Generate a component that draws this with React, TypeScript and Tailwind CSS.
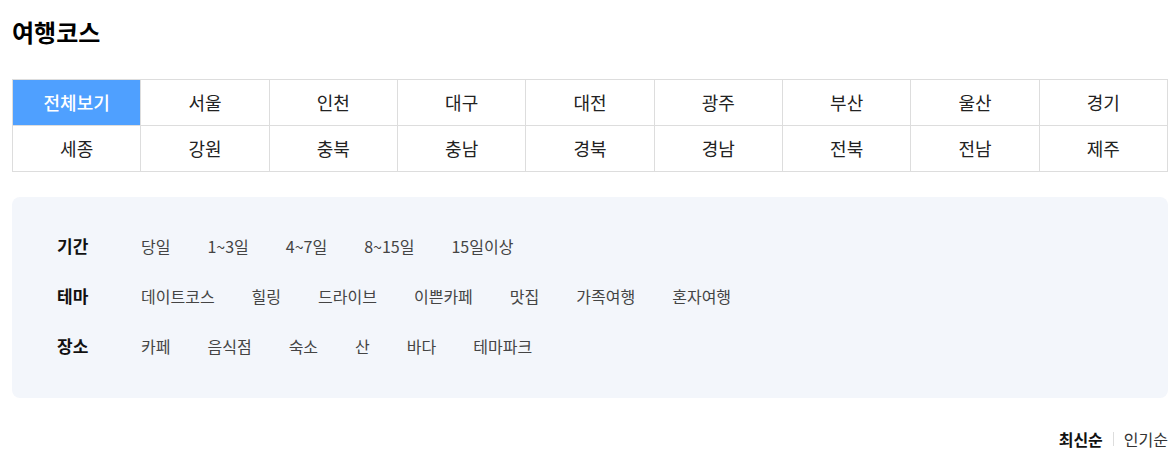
import { useState } from 'react';

// 여행코스 - region tabs + filter panel + sort toggle
const regions = [
  '전체보기', '서울', '인천', '대구', '대전', '광주', '부산', '울산', '경기',
  '세종', '강원', '충북', '충남', '경북', '경남', '전북', '전남', '제주',
];

const filters = [
  { label: '기간', items: ['당일', '1~3일', '4~7일', '8~15일', '15일이상'] },
  { label: '테마', items: ['데이트코스', '힐링', '드라이브', '이쁜카페', '맛집', '가족여행', '혼자여행'] },
  { label: '장소', items: ['카페', '음식점', '숙소', '산', '바다', '테마파크'] },
];

export default function App() {
  const [region, setRegion] = useState('전체보기');
  const [sort, setSort] = useState('최신순');

  return (
    <div
      className="w-[1173px] bg-white pl-3 pr-[5px] text-[#222]"
      style={{ fontFamily: '"Noto Sans CJK KR", "Noto Sans", sans-serif' }}
    >
      <h2 className="pt-[16px] text-[24px] font-bold leading-[32px] text-black">여행코스</h2>

      {/* Region grid */}
      <div className="mt-[31px] grid grid-cols-9 border-l border-t border-[#dddddd]">
        {regions.map((r) => (
          <button
            key={r}
            onClick={() => setRegion(r)}
            className={
              region === r
                ? 'h-[46px] border-b border-r border-[#dddddd] bg-[#4fa0ff] text-[18px] font-medium text-white'
                : 'h-[46px] border-b border-r border-[#dddddd] bg-white text-[18px] text-[#222]'
            }
          >
            {r}
          </button>
        ))}
      </div>

      {/* Filter panel */}
      <div className="mt-[25px] rounded-[8px] bg-[#f3f6fb] px-[45px] pb-[27px] pt-[24px]">
        {filters.map((f) => (
          <div key={f.label} className="flex h-[50px] items-center">
            <div className="w-[84px] text-[17px] font-bold text-[#111]">{f.label}</div>
            <div className="flex items-center gap-[37px]">
              {f.items.map((it) => (
                <span key={it} className="cursor-pointer text-[16px] text-[#444]">
                  {it}
                </span>
              ))}
            </div>
          </div>
        ))}
      </div>

      {/* Sort */}
      <div className="mt-[29px] flex items-center justify-end text-[16px]">
        {['최신순', '인기순'].map((s, i) => (
          <div key={s} className="flex items-center">
            {i > 0 && <span className="mx-[10px] h-[14px] w-px bg-[#dddddd]" />}
            <button
              onClick={() => setSort(s)}
              className={sort === s ? 'font-bold text-[#111]' : 'text-[#333]'}
            >
              {s}
            </button>
          </div>
        ))}
      </div>
    </div>
  );
}
